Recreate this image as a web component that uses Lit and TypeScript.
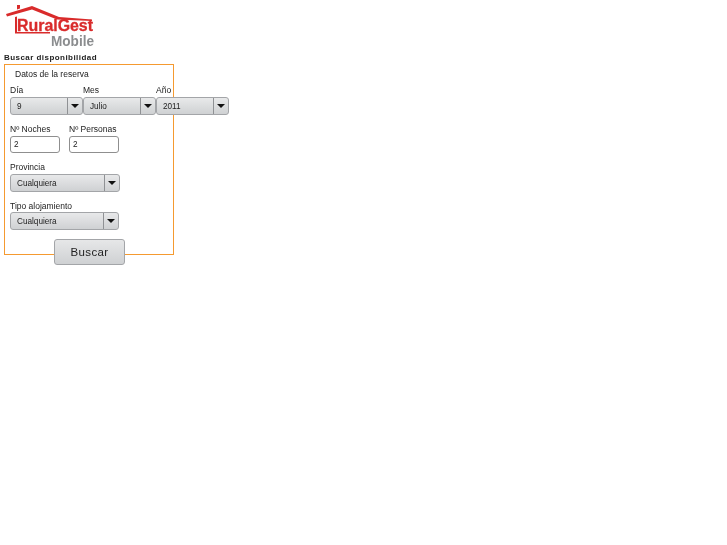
import { LitElement, html, css } from "lit";
import { customElement } from "lit/decorators.js";

@customElement("app-root")
export class AppRoot extends LitElement {
  static styles = css`
    :host { display: block; width: 727px; height: 545px; background: #fff; font-family: "Liberation Sans", Arial, sans-serif; color: #222; overflow: hidden; }
    .page { padding: 4px 0 0 4px; display: flex; flex-direction: column; align-items: flex-start; filter: blur(0.3px); }
    .logo { display: block; width: 92px; height: 44px; }
    .logo text { font-family: "Liberation Sans", Arial, sans-serif; font-weight: 700; }
    .title { font-size: 8px; line-height: 11px; font-weight: 700; letter-spacing: 0.45px; margin-top: 4px; height: 12px; color: #222; }
    .box { box-sizing: border-box; width: 170px; height: 191px; border: 1px solid #f59a30; padding: 4px 5px 0; }
    .legend { font-size: 8.5px; line-height: 11px; margin-left: 5px; height: 16px; }
    .lab { font-size: 8.5px; line-height: 11px; height: 11px; white-space: nowrap; }
    .row { display: flex; }
    .row.nums { gap: 9px; margin-top: 9px; }
    .field { display: flex; flex-direction: column; }
    .stack { margin-top: 9px; }
    .stack.second .sel { margin-top: 0; }
    .sel { box-sizing: border-box; height: 18px; margin-top: 1px; display: flex; align-items: stretch; border: 1px solid #a3a5a8; border-radius: 3px; background: linear-gradient(#e8e9ea, #cfd1d3); font-size: 8.2px; color: #222; }
    .sel .val { flex: 1; padding-left: 6px; display: flex; align-items: center; }
    .sel .arr { width: 14px; border-left: 1px solid #8f9194; display: flex; align-items: center; justify-content: center; }
    .arr svg { display: block; }
    .inp { box-sizing: border-box; width: 50px; height: 17px; margin-top: 1px; border: 1px solid #8f8f8f; border-radius: 3px; background: #fff; font-size: 8.2px; display: flex; align-items: center; padding-left: 3px; }
    .btn { box-sizing: border-box; width: 71px; height: 26px; margin: -16px 0 0 50px; border: 1px solid #a3a5a8; border-radius: 3px; background: linear-gradient(#e6e7e8, #cfd1d3); font-size: 11.5px; letter-spacing: 0.35px; display: flex; align-items: center; justify-content: center; color: #222; position: relative; }
  `;

  private sel(v: string, w: number) {
    return html`<div class="sel" style="width:${w}px"><div class="val">${v}</div><div class="arr"><svg width="8" height="4" viewBox="0 0 8 4"><path d="M0 0h8L4 4z" fill="#111"/></svg></div></div>`;
  }

  render() {
    return html`<div class="page">
      <svg class="logo" viewBox="0 0 92 44">
        <path d="M2 10 L28 2 L55 13 L88 15.5 L88 17 L53 15.5 L28 5.5 L3 12.5 Z" fill="#d92b2b"/>
        <path d="M13 5.5 L13 1 L16 1 L16 4.5 Z" fill="#d92b2b"/>
        <path d="M11 13 L13 12.5 L13 28 L46 28 L46 29.5 L11 29.5 Z" fill="#d92b2b"/>
        <text x="13" y="27" font-size="16" textLength="76" lengthAdjust="spacingAndGlyphs" fill="#d92b2b" stroke="#d92b2b" stroke-width="0.3">RuralGest</text>
        <text x="47" y="42" font-size="14" textLength="43" lengthAdjust="spacingAndGlyphs" fill="#8b8d8f">Mobile</text>
      </svg>
      <div class="title">Buscar disponibilidad</div>
      <div class="box">
        <div class="legend">Datos de la reserva</div>
        <div class="row">
          <div class="field" style="width:73px"><div class="lab">Día</div>${this.sel("9", 73)}</div>
          <div class="field" style="width:73px"><div class="lab">Mes</div>${this.sel("Julio", 73)}</div>
          <div class="field" style="width:73px"><div class="lab">Año</div>${this.sel("2011", 73)}</div>
        </div>
        <div class="row nums">
          <div class="field"><div class="lab">Nº Noches</div><div class="inp">2</div></div>
          <div class="field"><div class="lab">Nº Personas</div><div class="inp">2</div></div>
        </div>
        <div class="field stack"><div class="lab">Provincia</div>${this.sel("Cualquiera", 110)}</div>
        <div class="field stack second"><div class="lab">Tipo alojamiento</div>${this.sel("Cualquiera", 109)}</div>
      </div>
      <div class="btn">Buscar</div>
    </div>`;
  }
}
